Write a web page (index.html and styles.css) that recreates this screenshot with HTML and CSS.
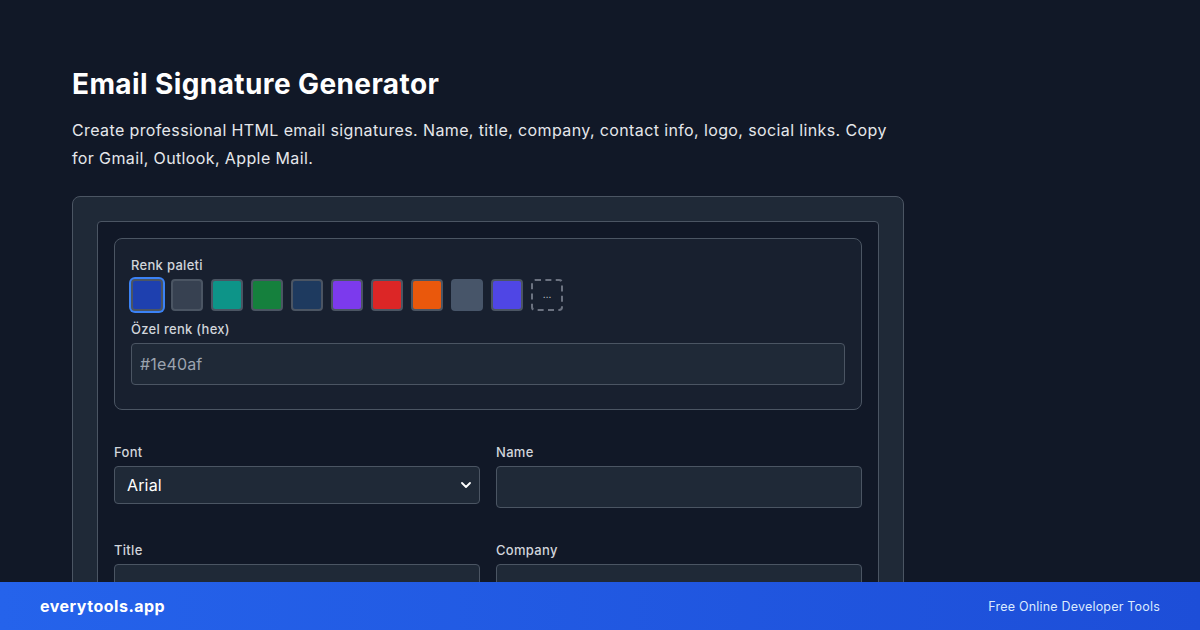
FILE: index.html
```html
<!DOCTYPE html>
<html lang="en">
<head>
<meta charset="utf-8">
<title>Email Signature Generator</title>
<link rel="stylesheet" href="styles.css">
</head>
<body>
<main class="page">
  <h1 class="title">Email Signature Generator</h1>
  <p class="lead">Create professional HTML email signatures. Name, title, company, contact info, logo, social links. Copy for Gmail, Outlook, Apple Mail.</p>
  <section class="card">
    <div class="panel">
      <div class="palette">
        <label class="label">Renk paleti</label>
        <div class="swatches">
          <span class="swatch selected" style="background:#1e40af"></span>
          <span class="swatch" style="background:#374151"></span>
          <span class="swatch" style="background:#0d9488"></span>
          <span class="swatch" style="background:#15803d"></span>
          <span class="swatch" style="background:#1e3a5f"></span>
          <span class="swatch" style="background:#7c3aed"></span>
          <span class="swatch" style="background:#dc2626"></span>
          <span class="swatch" style="background:#ea580c"></span>
          <span class="swatch plain" style="background:#475569"></span>
          <span class="swatch" style="background:#4f46e5"></span>
          <span class="swatch more">…</span>
        </div>
        <label class="label">Özel renk (hex)</label>
        <input class="input" type="text" placeholder="#1e40af">
      </div>
      <div class="grid">
        <div class="field">
          <label class="label">Font</label>
          <div class="select-wrap">
            <select class="select"><option>Arial</option></select>
            <svg class="chev" viewBox="0 0 10 6" width="10" height="6"><path d="M1 1l4 4 4-4" fill="none" stroke="#fff" stroke-width="1.8" stroke-linecap="round" stroke-linejoin="round"/></svg>
          </div>
        </div>
        <div class="field">
          <label class="label">Name</label>
          <input class="input" type="text">
        </div>
        <div class="field">
          <label class="label">Title</label>
          <input class="input" type="text">
        </div>
        <div class="field">
          <label class="label">Company</label>
          <input class="input" type="text">
        </div>
      </div>
    </div>
  </section>
</main>
<footer class="footer">
  <span class="brand">everytools.app</span>
  <span class="tagline">Free Online Developer Tools</span>
</footer>
</body>
</html>
```
FILE: styles.css
```css
* { box-sizing: border-box; }
html, body { margin: 0; padding: 0; }
body {
  background: #111827;
  color: #f3f4f6;
  font-family: Inter, "Noto Sans", "Liberation Sans", sans-serif;
  width: 1200px;
  height: 630px;
  overflow: hidden;
}
.page {
  padding: 66px 0 0 72px;
  width: 904px;
  box-sizing: content-box;
}
.title {
  margin: 0 0 14px;
  font-size: 28px;
  line-height: 36px;
  font-weight: 700;
  color: #ffffff;
  letter-spacing: 0.4px;
}
.lead {
  margin: 0 0 24px;
  font-size: 16px;
  line-height: 28px;
  color: #e5e7eb;
  letter-spacing: 0.38px;
  width: 832px;
}
.card {
  width: 832px;
  background: #1f2937;
  border: 1px solid #4b5563;
  border-radius: 8px;
  padding: 24px;
  height: 460px;
}
.panel {
  background: #111827;
  border: 1px solid #4b5563;
  border-radius: 4px;
  padding: 16px;
  height: 420px;
}
.palette {
  background: #18202f;
  border: 1px solid #4b5563;
  border-radius: 8px;
  padding: 16px 16px 24px;
  margin-bottom: 32px;
}
.label {
  display: block;
  font-size: 13px;
  line-height: 20px;
  font-weight: 500;
  color: #d1d5db;
  margin-bottom: 4px;
  letter-spacing: 0.3px;
}
.swatches {
  display: flex;
  gap: 8px;
  margin-bottom: 8px;
}
.swatch {
  width: 32px;
  height: 32px;
  border: 2px solid #4b5563;
  border-radius: 4px;
  display: block;
}
.swatch.plain { border-color: #475569; }
.swatch.selected {
  box-shadow: 0 0 0 2px #3b82f6;
}
.swatch.more {
  background: transparent;
  border: 2px dashed #6b7280;
  color: #d1d5db;
  font-size: 10px;
  line-height: 26px;
  text-align: center;
}
.input {
  display: block;
  width: 100%;
  height: 42px;
  background: #1f2937;
  border: 1px solid #4b5563;
  border-radius: 4px;
  padding: 0 8px;
  font-family: inherit;
  font-size: 16px;
  color: #f3f4f6;
  outline: none;
  letter-spacing: 0.15px;
}
.input::placeholder { color: #9ca3af; }
.grid {
  display: grid;
  grid-template-columns: 1fr 1fr;
  column-gap: 16px;
  row-gap: 32px;
}
.select-wrap { position: relative; }
.select {
  display: block;
  width: 100%;
  height: 38px;
  appearance: none;
  -webkit-appearance: none;
  background: #1f2937;
  border: 1px solid #4b5563;
  border-radius: 4px;
  padding: 0 12px;
  font-family: inherit;
  font-size: 16px;
  color: #ffffff;
  outline: none;
  letter-spacing: 0.15px;
}
.chev {
  position: absolute;
  right: 9px;
  top: 16px;
}
.footer {
  position: fixed;
  left: 0;
  right: 0;
  bottom: 0;
  height: 48px;
  display: flex;
  align-items: center;
  justify-content: space-between;
  padding: 0 40px;
  background: linear-gradient(90deg, #2563eb, #1d4ed8);
}
.brand {
  font-size: 16px;
  font-weight: 700;
  color: #ffffff;
  letter-spacing: 0.5px;
}
.tagline {
  font-size: 12.5px;
  color: #dbeafe;
  letter-spacing: 0.2px;
}
```
